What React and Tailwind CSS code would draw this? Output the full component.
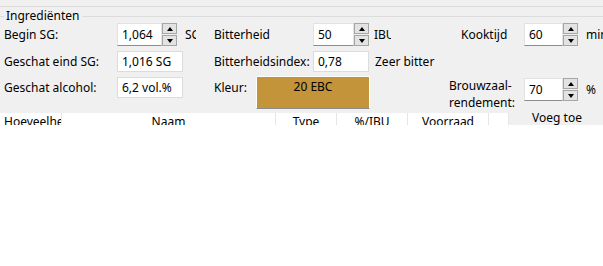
import React from 'react';

function SpinButtons({ h }) {
  return (
    <div className="flex flex-col w-[15px] shrink-0 gap-[1px]" style={{ height: h }}>
      <div className="flex-1 flex items-center justify-center border border-[#a6a6a6] bg-[#e3e3e3]">
        <div className="w-0 h-0 border-l-[3.5px] border-r-[3.5px] border-b-[4px] border-l-transparent border-r-transparent border-b-black" />
      </div>
      <div className="flex-1 flex items-center justify-center border border-[#a6a6a6] bg-[#e3e3e3]">
        <div className="w-0 h-0 border-l-[3.5px] border-r-[3.5px] border-t-[4px] border-l-transparent border-r-transparent border-t-black" />
      </div>
    </div>
  );
}

function SpinBox({ value, inputW }) {
  return (
    <div className="flex h-[23px] shrink-0">
      <div className="h-full shrink-0 bg-white border border-[#e2e2e2] border-b-[#8c8c8c] pl-[4px] flex items-center" style={{ width: inputW }}>
        {value}
      </div>
      <SpinButtons h={23} />
    </div>
  );
}

function LineEdit({ value, w }) {
  return (
    <div className="h-[21px] shrink-0 bg-white border border-[#dcdcdc] pl-[4px] flex items-center" style={{ width: w }}>
      {value}
    </div>
  );
}

const headers = [
  { label: 'Hoeveelheid', w: 62, left: true },
  { label: 'Naam', w: 214 },
  { label: 'Type', w: 61 },
  { label: '%/IBU', w: 71 },
  { label: 'Voorraad', w: 81 },
  { label: '', w: 20 },
];

export default function App() {
  return (
    <div className="h-[125px] overflow-hidden bg-[#f0f0f0] text-[12px] leading-[16px] text-black font-['Noto_Sans',sans-serif]">
      {/* top frame line */}
      <div className="h-[6px]" />
      <div className="h-px bg-[#dcdcdc]" />

      {/* group title */}
      <div className="flex items-center h-[16px] mt-[1px]">
        <div className="w-[4px] h-px bg-[#dcdcdc]" />
        <span className="px-[2px]">Ingrediënten</span>
        <div className="flex-1 h-px bg-[#dcdcdc]" />
      </div>

      {/* row 1 */}
      <div className="flex items-center h-[23px] mt-[-1px] pl-[4px] whitespace-nowrap">
        <div className="w-[113px] shrink-0">Begin SG:</div>
        <SpinBox value="1,064" inputW={45} />
        <div className="w-[11px] shrink-0 ml-[8px] overflow-hidden">SG</div>
        <div className="w-[99px] shrink-0 ml-[18px]">Bitterheid</div>
        <SpinBox value="50" inputW={41} />
        <div className="w-[17px] shrink-0 ml-[5px] overflow-hidden">IBU</div>
        <div className="w-[63px] shrink-0 ml-[70px]">Kooktijd</div>
        <SpinBox value="60" inputW={39} />
        <div className="ml-[8px] shrink-0">min</div>
      </div>

      {/* row 2 */}
      <div className="flex items-center h-[21px] mt-[5px] pl-[4px] whitespace-nowrap">
        <div className="w-[113px] shrink-0">Geschat eind SG:</div>
        <LineEdit value="1,016 SG" w={66} />
        <div className="w-[99px] shrink-0 ml-[31px]">Bitterheidsindex:</div>
        <LineEdit value="0,78" w={56} />
        <div className="ml-[6px] shrink-0">Zeer bitter</div>
      </div>

      {/* row 3 */}
      <div className="flex items-start h-[33px] mt-[4px] pl-[4px] whitespace-nowrap">
        <div className="w-[113px] shrink-0 h-[21px] mt-[1px] flex items-center">Geschat alcohol:</div>
        <div className="mt-[1px] shrink-0">
          <LineEdit value="6,2 vol.%" w={66} />
        </div>
        <div className="w-[42px] shrink-0 ml-[31px] h-[21px] mt-[1px] flex items-center">Kleur:</div>
        <div className="w-[114px] shrink-0 h-[33px] border border-white border-b-[#8c8c8c] bg-[#c4943a] flex justify-center pt-[2px]">
          20 EBC
        </div>
        <div className="ml-[79px] w-[75px] shrink-0 h-[33px] flex flex-col justify-center leading-[17px] pt-[3px]">
          <span>Brouwzaal-</span>
          <span>rendement:</span>
        </div>
        <div className="mt-[2px] shrink-0">
          <SpinBox value="70" inputW={39} />
        </div>
        <div className="ml-[8px] mt-[6px] shrink-0">%</div>
      </div>

      {/* table header + button */}
      <div className="flex items-start">
        <div className="flex w-[509px] shrink-0 bg-white mt-[4px] h-[20px]">
          {headers.map((h, i) => (
            <div
              key={i}
              className={`h-full shrink-0 border-r border-[#e5e5e5] overflow-hidden whitespace-nowrap pt-[1px] ${h.left ? 'pl-[4px]' : 'text-center'}`}
              style={{ width: h.w }}
            >
              {h.label}
            </div>
          ))}
        </div>
        <div className="flex-1 text-center pt-[1px] pl-[2px] whitespace-nowrap">Voeg toe</div>
      </div>
    </div>
  );
}
